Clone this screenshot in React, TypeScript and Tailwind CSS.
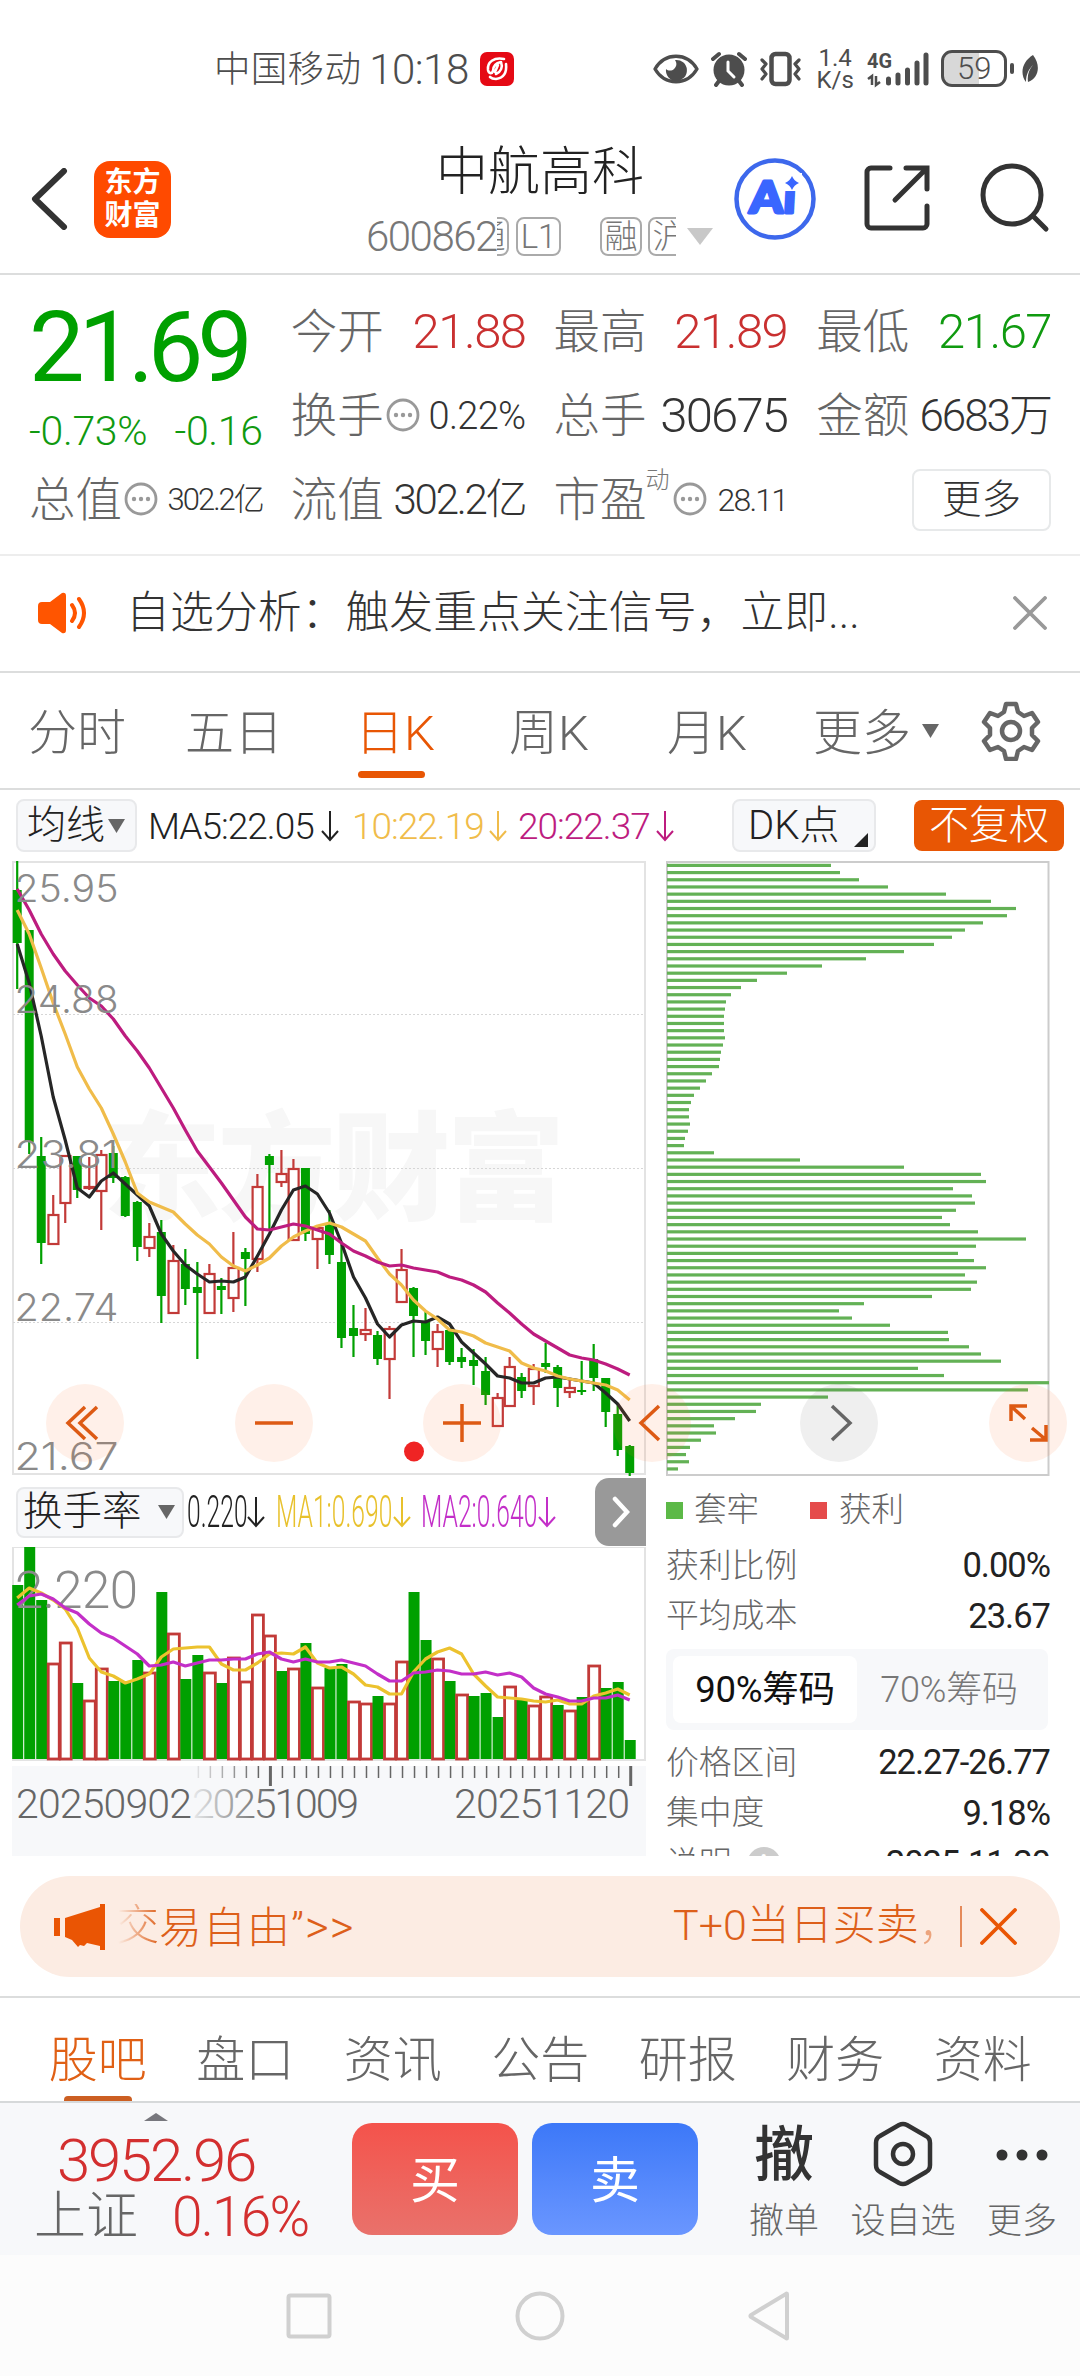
import type { ReactNode } from "react";

const GREEN = "#00a000";
const RED = "#c23a38";

// [open/close top, open/close bottom, high, low, rising]
const candles = [
  [29, 82, 0, 128, 0], [69, 281, 69, 293, 0], [295, 382, 276, 403, 0], [353, 384, 334, 384, 1],
  [294, 343, 294, 362, 1], [295, 329, 295, 337, 0], [325, 327, 296, 329, 1], [293, 331, 289, 369, 1],
  [292, 317, 285, 322, 0], [316, 355, 315, 356, 0], [341, 386, 340, 400, 0], [375, 388, 362, 396, 1],
  [371, 435, 359, 462, 0], [399, 453, 384, 453, 1], [403, 428, 388, 444, 0], [426, 432, 401, 498, 0],
  [412, 453, 403, 453, 1], [425, 429, 417, 453, 0], [406, 438, 371, 451, 1], [391, 398, 387, 445, 0],
  [325, 399, 313, 411, 1], [295, 304, 293, 369, 0], [312, 322, 289, 326, 1], [307, 380, 298, 380, 1],
  [307, 373, 307, 380, 0], [366, 379, 366, 408, 1], [362, 394, 349, 403, 0], [401, 477, 384, 487, 0],
  [467, 475, 444, 496, 0], [468, 474, 447, 480, 1], [474, 498, 470, 504, 0], [467, 499, 465, 538, 1],
  [408, 442, 388, 442, 1], [427, 455, 426, 496, 0], [461, 480, 450, 494, 0], [470, 489, 463, 506, 1],
  [469, 501, 467, 504, 0], [496, 501, 487, 507, 0], [499, 505, 488, 524, 0], [510, 534, 496, 544, 0],
  [536, 566, 532, 566, 1], [505, 546, 496, 546, 1], [516, 530, 512, 537, 0], [507, 526, 503, 544, 1],
  [502, 506, 482, 512, 0], [506, 527, 504, 546, 0], [526, 532, 519, 537, 1], [529, 531, 500, 534, 0],
  [498, 517, 483, 530, 0], [517, 551, 517, 566, 0], [553, 589, 544, 595, 0], [585, 612, 584, 615, 0],
];

const ma5 = [83, 122, 175, 236, 279, 327, 336, 320, 312, 323, 334, 345, 373, 390, 404, 413, 421, 420, 421, 416, 395, 373, 349, 329, 325, 333, 352, 382, 416, 437, 463, 476, 464, 460, 461, 456, 463, 481, 492, 503, 515, 517, 522, 522, 517, 516, 518, 520, 522, 532, 543, 560];
const ma10 = [49, 73, 107, 142, 173, 206, 228, 247, 273, 301, 332, 341, 346, 351, 363, 374, 383, 396, 405, 410, 404, 397, 385, 376, 370, 365, 362, 366, 373, 380, 397, 413, 424, 439, 450, 458, 469, 471, 475, 482, 486, 490, 502, 507, 510, 515, 518, 520, 522, 524, 529, 539];
const ma20 = [28, 49, 73, 93, 110, 124, 137, 145, 158, 175, 190, 207, 227, 247, 269, 290, 306, 322, 339, 356, 368, 369, 366, 363, 365, 369, 373, 382, 390, 395, 401, 405, 404, 407, 409, 411, 416, 419, 424, 431, 442, 452, 463, 473, 480, 487, 494, 497, 499, 503, 508, 514];

const turnover = [39, 1, 54, 117, 96, 137, 154, 122, 135, 136, 114, 126, 46, 87, 133, 109, 126, 137, 111, 135, 68, 89, 125, 122, 97, 141, 122, 118, 155, 157, 150, 157, 115, 46, 94, 112, 135, 148, 150, 147, 171, 140, 154, 159, 150, 159, 164, 151, 119, 142, 136, 194];
const turnoverUp = [3, 4, 6, 7, 11, 13, 16, 18, 19, 20, 21, 23, 25, 28, 29, 31, 32, 35, 37, 41, 43, 44, 46, 48];
const volMa1 = [52, 42, 47, 54, 63, 82, 112, 126, 130, 137, 133, 128, 111, 103, 102, 101, 101, 118, 124, 124, 117, 108, 107, 108, 101, 117, 122, 121, 128, 139, 141, 148, 148, 126, 113, 106, 102, 108, 128, 140, 151, 152, 153, 155, 156, 154, 158, 158, 150, 147, 143, 149];
const volMa2 = [59, 50, 48, 53, 62, 67, 78, 87, 92, 100, 108, 120, 119, 116, 120, 117, 114, 114, 113, 113, 108, 106, 113, 116, 113, 116, 116, 114, 117, 120, 128, 135, 135, 127, 126, 124, 125, 128, 128, 126, 129, 127, 131, 142, 148, 151, 155, 155, 152, 152, 149, 154];

const chips = [
  164, 173, 192, 221, 279, 324, 349, 340, 316, 298, 285, 267, 237, 199, 155, 120, 90, 74, 64, 59,
  58, 57, 57, 57, 58, 56, 54, 53, 52, 45, 39, 33, 27, 24, 22, 22, 23, 21, 18, 17,
  47, 133, 237, 314, 319, 286, 305, 308, 289, 275, 283, 311, 359, 309, 291, 307, 319, 298, 310, 304,
  265, 197, 172, 185, 223, 281, 282, 302, 314, 334, 251, 277, 382, 361, 161, 94, 89, 68, 47, 49,
  34, 23, 19, 22, 11,
];

const cx = (i: number) => -1.8 + i * 12.01;
const line = (ys: number[]) => ys.map((y, i) => `${cx(i).toFixed(1)},${y}`).join(" ");

function StatusBar() {
  return (
    <div className="flex h-[138px] items-center pl-[214px] text-[#4d4d4d]">
      <span className="text-[36.500px] tracking-[0.300px] leading-none pt-[3px]">中国移动</span>
      <span className="ml-[8px] w-[104px] pt-[3px] text-[42px] leading-none tracking-[-0.500px]">10:18</span>
      <svg className="ml-[7px]" width="34" height="34" viewBox="0 0 34 34">
        <rect width="34" height="34" rx="7" fill="#e50914" />
        <path d="M24 7C14 5 7 10 8 18c1 4 4 4 5 1 0-5 3-8 8-9M26 12c1 9-3 14-10 15-4 0-5-1-6-2M21 10c2 5 0 10-5 12M18 13l-3 7" fill="none" stroke="#fff" strokeWidth="2.6" strokeLinecap="round" />
      </svg>
      <svg className="ml-[139px]" width="46" height="34" viewBox="0 0 46 34">
        <path d="M2 17C12 0 34 0 44 17 34 34 12 34 2 17z" fill="none" stroke="#4d4d4d" strokeWidth="3.400" strokeLinejoin="round" />
        <path d="M22 8a10.500 10.500 0 1 1-9 9c2 2 6 2 8 0 3-3 3-6 1-9z" fill="#4d4d4d" />
      </svg>
      <svg className="ml-[12px]" width="36" height="36" viewBox="0 0 36 36">
        <circle cx="18" cy="19" r="15.500" fill="#4d4d4d" />
        <path d="M17 11v9l6 6" fill="none" stroke="#fff" strokeWidth="3" strokeLinecap="round" />
        <path d="M2 8l6-5M34 8l-6-5M5 34l3-4M31 34l-3-4" stroke="#4d4d4d" strokeWidth="4" strokeLinecap="round" />
      </svg>
      <svg className="ml-[12px]" width="44" height="36" viewBox="0 0 44 36">
        <rect x="12.500" y="3" width="18" height="30" rx="4" fill="none" stroke="#4d4d4d" strokeWidth="4.500" />
        <path d="M3 9l4 4-4 5 4 5-4 5M40 9l-4 4 4 5-4 5 4 5" fill="none" stroke="#4d4d4d" strokeWidth="3.200" strokeLinejoin="round" strokeLinecap="round" />
      </svg>
      <div className="ml-[14px] flex w-[36px] flex-col items-center font-['Roboto'] text-[24px] font-normal leading-[22px]">
        <span>1.4</span>
        <span>K/s</span>
      </div>
      <svg className="ml-[14px]" width="64" height="38" viewBox="0 0 64 38">
        <text x="0" y="18" fontFamily="Roboto" fontWeight="700" fontSize="21" textLength="25" lengthAdjust="spacingAndGlyphs" fill="#4d4d4d">4G</text>
        <path d="M5 35V26l-4 3M9 26v9l4-3" fill="none" stroke="#4d4d4d" strokeWidth="2.500" />
        <path d="M21.500 29v4M31 25v8M40.500 20v13M50 13v20M59 5v28" stroke="#4d4d4d" strokeWidth="5" strokeLinecap="round" />
      </svg>
      <div className="ml-[10px] flex h-[37px] w-[66px] items-center justify-center rounded-[11px] border-[3px] border-[#4d4d4d] bg-[linear-gradient(90deg,#d8d8d8_59%,#fff_59%)] text-[31px] leading-none">
        59
      </div>
      <div className="ml-[3px] h-[11px] w-[4px] rounded-full bg-[#4d4d4d]" />
      <svg className="ml-[7px]" width="18" height="30" viewBox="0 0 18 30">
        <path d="M12 1C20 11 18 24 7 28c-1-7 1-12 5-17C8 15 5 20 5 28-2 19 2 7 12 1z" fill="#4d4d4d" />
      </svg>
    </div>
  );
}

function Tag({ children, className = "" }: { children: ReactNode; className?: string }) {
  return (
    <span className={`flex h-[39px] shrink-0 items-center justify-center overflow-hidden rounded-[8px] border-2 border-[#aaa] text-[33px] leading-none text-[#777] ${className}`}>
      {children}
    </span>
  );
}

function Header() {
  return (
    <header className="flex h-[137px] items-start border-b-2 border-[#dcdddd] pl-[31px]">
      <svg className="mt-[30px]" width="37" height="62" viewBox="0 0 37 62">
        <path d="M33 3L4 31l29 28" fill="none" stroke="#333" strokeWidth="6" strokeLinecap="round" strokeLinejoin="round" />
      </svg>
      <div className="ml-[26px] mt-[23px] flex h-[77px] w-[77px] flex-col items-center justify-center rounded-[16px] bg-[#ff4a00] text-[28px] font-bold leading-[33px] text-white">
        <span>东方</span>
        <span>财富</span>
      </div>
      <div className="ml-[195px] w-[349px] pt-[8px]">
        <h1 className="pl-[70px] text-[52px] leading-[54px] text-[#222]">中航高科</h1>
        <div className="mt-[17px] flex h-[40px] items-center">
          <span className="w-[131px] pt-px text-[42px] leading-none tracking-[-1.500px] text-[#777]">600862</span>
          <span className="flex w-[12px] justify-end overflow-hidden">
            <Tag className="w-[40px]">通</Tag>
          </span>
          <Tag className="ml-[7px] w-[45px]">L1</Tag>
          <Tag className="ml-[39px] w-[42px]">融</Tag>
          <span className="ml-[6px] flex w-[28px] overflow-hidden">
            <Tag className="w-[42px]">沪</Tag>
          </span>
          <svg className="ml-[11px]" width="26" height="17" viewBox="0 0 26 17">
            <path d="M0 0h26L13 17z" fill="#c8c8c8" />
          </svg>
        </div>
      </div>
      <svg className="ml-[19px] mt-[20px]" width="82" height="82" viewBox="0 0 82 82">
        <circle cx="41" cy="41" r="38.500" fill="none" stroke="#3d68ec" strokeWidth="4.500" />
        <text x="16" y="55" fontFamily="Lato, sans-serif" fontWeight="900" fontSize="44" textLength="46" lengthAdjust="spacingAndGlyphs" fill="#3a66ff" stroke="#3a66ff" strokeWidth="3" strokeLinejoin="round" transform="skewX(-3) translate(2 0)">Ai</text>
        <rect x="50" y="15" width="18" height="18" fill="#fff" />
        <path d="M58 18q2 5 7 7-5 2-7 7-2-5-7-7 5-2 7-7z" fill="#3a66ff" />
      </svg>
      <svg className="ml-[47px] mt-[26px]" width="68" height="68" viewBox="0 0 68 68">
        <path d="M27 4H8a4 4 0 0 0-4 4v52a4 4 0 0 0 4 4h52a4 4 0 0 0 4-4V42M43 4h21v21M63 5L32 36" fill="none" stroke="#333" strokeWidth="5" strokeLinecap="round" />
      </svg>
      <svg className="ml-[49px] mt-[25px]" width="70" height="72" viewBox="0 0 70 72">
        <circle cx="32" cy="32" r="29" fill="none" stroke="#333" strokeWidth="5" />
        <path d="M53 53l13 13" stroke="#333" strokeWidth="5" strokeLinecap="round" />
      </svg>
    </header>
  );
}

function MoreDots() {
  return (
    <svg className="ml-[2px] shrink-0" width="34" height="34" viewBox="0 0 34 34">
      <circle cx="17" cy="17" r="15" fill="none" stroke="#999" strokeWidth="2.800" />
      <circle cx="10" cy="17" r="2.200" fill="#999" />
      <circle cx="17" cy="17" r="2.200" fill="#999" />
      <circle cx="24" cy="17" r="2.200" fill="#999" />
    </svg>
  );
}

function Quote({ label, dots, sup, children }: { label: string; dots?: boolean; sup?: string; children: ReactNode }) {
  return (
    <div className="flex h-[60px] items-center whitespace-nowrap leading-none">
      <span className="pt-[2px] text-[46.500px] text-[#666]">{label}</span>
      {sup && <sup className="top-0 -ml-px -mt-px w-[25px] self-start text-[24px] leading-none text-[#777]">{sup}</sup>}
      {dots && <MoreDots />}
      <span className="ml-auto pt-[2px] text-[#333]">{children}</span>
    </div>
  );
}

function QuotePanel() {
  return (
    <section className="flex h-[281px] border-b-2 border-[#ededed] px-[29px]">
      <div className="w-[234px] whitespace-nowrap leading-none">
        <div className="mt-[22px] h-[99px] text-[99px] font-normal leading-[100px] tracking-[-6.200px] text-[#00a000]">21.69</div>
        <div className="mt-[11px] flex h-[50px] items-center justify-between text-[41px] text-[#109a10]">
          <span className="tracking-[-0.300px]">-0.73%</span>
          <span className="tracking-[-0.300px]">-0.16</span>
        </div>
        <div className="mt-[12px]">
          <Quote label="总值" dots>
            <span className="text-[31px] tracking-[-2px]">302.2亿</span>
          </Quote>
        </div>
      </div>
      <div className="ml-[28px] flex w-[235px] flex-col gap-[24px] pt-[26px]">
        <Quote label="今开"><span className="text-[49px] tracking-[-1.500px] text-[#c93030]">21.88</span></Quote>
        <Quote label="换手" dots><span className="text-[38px] tracking-[-0.700px]">0.22%</span></Quote>
        <Quote label="流值"><span className="text-[42px] tracking-[-2.200px]">302.2亿</span></Quote>
      </div>
      <div className="ml-[28px] flex w-[234px] flex-col gap-[24px] pt-[26px]">
        <Quote label="最高"><span className="text-[49px] tracking-[-1.500px] text-[#c93030]">21.89</span></Quote>
        <Quote label="总手"><span className="text-[49px] tracking-[-1.800px]">30675</span></Quote>
        <Quote label="市盈" sup="动" dots><span className="text-[32px] tracking-[-1.800px]">28.11</span></Quote>
      </div>
      <div className="ml-[29px] flex w-[235px] flex-col gap-[24px] pt-[26px]">
        <Quote label="最低"><span className="text-[49px] tracking-[-1.500px] text-[#109a10]">21.67</span></Quote>
        <Quote label="金额"><span className="text-[44px] tracking-[-2px]">6683万</span></Quote>
        <button className="h-[62px] w-[139px] self-end rounded-[8px] border-2 border-[#e7e9ea] text-[39.500px] leading-none text-[#333]">更多</button>
      </div>
    </section>
  );
}

function NewsRow() {
  return (
    <section className="flex h-[118px] items-center border-b-2 border-[#dcdddd] pl-[38px] pr-[33px]">
      <svg width="52" height="42" viewBox="0 0 52 42">
        <path d="M4 10h8L24 1q4-1 4 3v34q0 4-4 3L12 32H4q-4 0-4-4V14q0-4 4-4z" fill="#ff5500" />
        <path d="M34 13q6 8 0 16M41 7q10 14 0 28" fill="none" stroke="#ff5500" strokeWidth="4" strokeLinecap="round" />
      </svg>
      <p className="ml-[36px] flex-1 pt-px text-[43.900px] leading-none text-[#333]">自选分析：触发重点关注信号，立即...</p>
      <svg width="34" height="34" viewBox="0 0 34 34">
        <path d="M2 2l30 30M32 2L2 32" stroke="#999" strokeWidth="3.800" strokeLinecap="round" />
      </svg>
    </section>
  );
}

function Caret({ className = "" }: { className?: string }) {
  return (
    <svg className={className} width="17" height="14" viewBox="0 0 17 14">
      <path d="M0 0h17L8.500 14z" fill="#666" />
    </svg>
  );
}

function PeriodTabs() {
  return (
    <nav className="flex h-[117px] items-center border-b-2 border-[#dcdddd] pl-[28px] text-[49px] leading-none text-[#666]">
      <span className="w-[157px] pt-[5px]">分时</span>
      <span className="w-[170px] pt-[5px]">五日</span>
      <span className="relative w-[154px] pt-[5px] text-[#e85604]">
        日K
        <i className="absolute -bottom-[20px] left-[3px] h-[7px] w-[67px] rounded-full bg-[#e85604]" />
      </span>
      <span className="w-[158px] pt-[5px]">周K</span>
      <span className="w-[146px] pt-[5px]">月K</span>
      <span className="pt-[5px]">更多</span>
      <Caret className="ml-[11px]" />
      <svg className="ml-[42px]" width="60" height="60" viewBox="0 0 60 60">
        <path d="M25 3h10l2 8 6 4 8-3 6 9-6 6v7l6 6-6 9-8-3-6 4-2 8H25l-2-8-6-4-8 3-6-9 6-6v-7l-6-6 6-9 8 3 6-4z" fill="none" stroke="#666" strokeWidth="4.500" strokeLinejoin="round" />
        <circle cx="30" cy="30" r="9" fill="none" stroke="#666" strokeWidth="4.500" />
      </svg>
    </nav>
  );
}

function Down({ color }: { color: string }) {
  return (
    <svg className="shrink-0" width="18" height="32" viewBox="0 0 18 32">
      <path d="M9 1v29M1 21l8 9 8-9" fill="none" stroke={color} strokeWidth="2" />
    </svg>
  );
}

function MaRow() {
  return (
    <div className="flex h-[71px] items-center pl-[16px] text-[37px] leading-none tracking-[-1px]">
      <button className="flex h-[53px] w-[121px] items-center rounded-[8px] border-2 border-[#e8e9eb] bg-[#f7f8fa] pl-[9px] text-[39px] tracking-normal text-[#222]">
        均线
        <Caret className="ml-[3px]" />
      </button>
      <span className="ml-[11px] w-[173px] pt-[2px] text-[#222]">MA5:22.05</span>
      <Down color="#222" />
      <span className="ml-[13px] w-[137px] pt-[2px] text-[#f0bc4a]">10:22.19</span>
      <Down color="#f0bc4a" />
      <span className="ml-[11px] w-[138px] pt-[2px] text-[#bd1c7f]">20:22.37</span>
      <Down color="#bd1c7f" />
      <button className="ml-[58px] flex h-[53px] w-[144px] items-center rounded-[8px] border-2 border-[#e8e9eb] bg-[#f7f8fa] pl-[14px] text-[40px] tracking-normal text-[#222]">
        DK点
        <svg className="mb-[3px] ml-auto mr-[6px] self-end" width="14" height="14" viewBox="0 0 14 14">
          <path d="M14 0v14H0z" fill="#222" />
        </svg>
      </button>
      <button className="ml-[38px] h-[51px] w-[150px] rounded-[8px] bg-[#e85604] text-[40px] tracking-normal text-white">不复权</button>
    </div>
  );
}

function KLineChart() {
  const prices = [["25.95", 41], ["24.88", 152], ["23.81", 307], ["22.74", 460], ["21.67", 609]] as const;
  return (
    <svg className="block" width="634" height="616" viewBox="-7 0 634 616">
      <rect x="-6" y="1" width="632" height="612" fill="#fff" stroke="#e3e3e3" strokeWidth="2" />
      <text x="84" y="350" fontSize="118" fontWeight="900" textLength="462" fill="#f7f7f7">东方财富</text>
      {[153.5, 307.5, 461.5].map((y) => (
        <path key={y} d={`M-6 ${y}h632`} stroke="#d6d6d6" strokeDasharray="2 2" />
      ))}
      {candles.map(([top, bottom, high, low, up], i) => (
        <g key={i} stroke={up ? RED : GREEN} strokeWidth="2.200">
          <path d={`M${cx(i)} ${high}V${top}M${cx(i)} ${bottom}V${low}`} />
          {up ? (
            <rect x={cx(i) - 4.8} y={top + 1} width="10" height={Math.max(bottom - top - 2, 1)} fill="#fff" />
          ) : (
            <rect x={cx(i) - 4.5} y={top} width="9" height={bottom - top} fill={GREEN} stroke="none" />
          )}
        </g>
      ))}
      <g fill="none" strokeWidth="3.200" strokeLinejoin="round">
        <polyline points={line(ma5)} stroke="#262626" />
        <polyline points={line(ma10)} stroke="#f0bc4a" />
        <polyline points={line(ma20)} stroke="#bd1c7f" />
      </g>
      <g fontFamily="Inter, sans-serif" fontWeight="300" fontSize="37.500" fill="#8a8a8a">
        {prices.map(([label, y]) => (
          <text key={label} x="-4.500" y={y} textLength="104" lengthAdjust="spacingAndGlyphs">{label}</text>
        ))}
      </g>
      <circle cx="395" cy="590.500" r="10" fill="#ef2424" />
    </svg>
  );
}

function IndicatorRow() {
  return (
    <div className="flex h-[70px] items-center pl-[4px] text-[44px] leading-none">
      <button className="flex h-[51px] w-[168px] shrink-0 items-center rounded-[8px] border-2 border-[#e8e9eb] bg-[#f7f8fa] pl-[5px] text-[39.500px] text-[#222]">
        换手率
        <Caret className="ml-[16px]" />
      </button>
      <span className="ml-[3px] flex w-[60px] shrink-0"><span className="origin-left scale-x-[0.56] whitespace-nowrap text-[#222]">0.220</span></span>
      <Down color="#222" />
      <span className="ml-[11px] flex w-[117px] shrink-0"><span className="origin-left scale-x-[0.56] whitespace-nowrap text-[#e8c12c]">MA1:0.690</span></span>
      <Down color="#e8c12c" />
      <span className="ml-[10px] flex w-[117px] shrink-0"><span className="origin-left scale-x-[0.56] whitespace-nowrap text-[#c32fc8]">MA2:0.640</span></span>
      <Down color="#c32fc8" />
      <button className="ml-auto flex h-[68px] w-[51px] shrink-0 items-center justify-center rounded-l-[14px] bg-[#999]">
        <svg width="18" height="32" viewBox="0 0 18 32">
          <path d="M3 3l12 13L3 29" fill="none" stroke="#fff" strokeWidth="4.500" strokeLinecap="round" />
        </svg>
      </button>
    </div>
  );
}

function TurnoverChart() {
  return (
    <svg className="block" width="634" height="219" viewBox="-7 1 634 219">
      <rect x="-6" y="1" width="632" height="213" fill="#fff" stroke="#e3e3e3" strokeWidth="2" />
      {turnover.map((top, i) =>
        turnoverUp.includes(i) ? (
          <rect key={i} x={cx(i) - 5} y={top + 1} width="11" height={212 - top} fill="#fff" stroke={RED} strokeWidth="2.800" />
        ) : (
          <rect key={i} x={cx(i) - 5} y={top} width="11" height={213 - top} fill={GREEN} />
        ),
      )}
      <text x="-4" y="62" fontSize="51" fontWeight="300" textLength="123" fill="#8a8a8a">2.220</text>
      <g fill="none" strokeWidth="3.200" strokeLinejoin="round">
        <polyline points={line(volMa1)} stroke="#ecc22e" />
        <polyline points={line(volMa2)} stroke="#c32fc8" />
      </g>
    </svg>
  );
}

function DateAxis() {
  return (
    <svg className="block bg-[#f7f8fa]" width="634" height="92" viewBox="-7 0 634 92">
      <defs>
        <linearGradient id="fade">
          <stop offset="0" stopColor="#666" stopOpacity="0.100" />
          <stop offset="0.350" stopColor="#666" stopOpacity="0.800" />
          <stop offset="0.500" stopColor="#666" />
        </linearGradient>
      </defs>
      {turnover.map((_, i) => {
        if (i < 15) return null;
        const long = i === 21 || i === 51;
        return (
          <path key={i} d={`M${cx(i) + 1} 0v${long ? 20 : 12}`} stroke="#666" strokeWidth={long ? 3 : 1.5} opacity={Math.min(1, (i - 14) / 6)} />
        );
      })}
      <g fontSize="41" fontWeight="300" fill="#666">
        <text x="-3" y="52" textLength="176">20250902</text>
        <text x="173" y="52" textLength="167" fill="url(#fade)">20251009</text>
        <text x="435" y="52" textLength="176">20251120</text>
      </g>
    </svg>
  );
}

function ChipChart() {
  return (
    <svg className="block" width="384" height="616" viewBox="0 0 384 616">
      <rect x="1" y="1" width="381.500" height="613" fill="#fff" stroke="#cccccc" strokeWidth="2" />
      <g fill="#63b155">
        {chips.map((w, i) => (
          <rect key={i} x="1" y={2.8 + i * 7.185} width={w} height="3.200" />
        ))}
      </g>
    </svg>
  );
}

function Row({ label, value }: { label: ReactNode; value: string }) {
  return (
    <div className="flex h-[50.500px] items-center justify-between leading-none">
      <span className="flex items-center pt-px text-[32.800px] text-[#666]">{label}</span>
      <span className="text-[34.500px] font-normal tracking-[-1px] text-[#222]">{value}</span>
    </div>
  );
}

function ChipPanel() {
  return (
    <div className="w-[384px]">
      <ChipChart />
      <div className="flex h-[63px] items-center pt-[3px] text-[32.500px] leading-none text-[#666]">
        <i className="h-[17px] w-[17px] bg-[#5cb947]" />
        <span className="ml-[11px]">套牢</span>
        <i className="ml-[51px] h-[17px] w-[17px] bg-[#e54b4b]" />
        <span className="ml-[12px]">获利</span>
      </div>
      <Row label="获利比例" value="0.00%" />
      <Row label="平均成本" value="23.67" />
      <div className="mb-[7px] mt-[8px] flex h-[81px] w-[382px] items-center rounded-[8px] bg-[#f7f8fa] p-[7px] leading-none">
        <span className="flex h-[67px] w-[184px] items-center justify-center whitespace-nowrap rounded-[8px] bg-white pt-px text-[36.500px] font-normal tracking-[-0.300px] text-[#111]">90%筹码</span>
        <span className="flex-1 whitespace-nowrap pt-px text-center text-[36px] tracking-[-0.200px] text-[#777]">70%筹码</span>
      </div>
      <Row label="价格区间" value="22.27-26.77" />
      <Row label="集中度" value="9.18%" />
      <Row
        label={
          <>
            说明
            <i className="ml-[15px] flex h-[34px] w-[34px] items-center justify-center rounded-full bg-[#ccc] text-[24px] font-bold not-italic text-white">i</i>
          </>
        }
        value="2025-11-20"
      />
    </div>
  );
}

function RoundButton({ children, className }: { children: ReactNode; className: string }) {
  return (
    <button className={`absolute top-[523px] flex h-[78px] w-[78px] items-center justify-center rounded-full ${className}`}>
      <svg width="42" height="42" viewBox="0 0 42 42" fill="none" stroke="currentColor" strokeWidth="3.500">
        {children}
      </svg>
    </button>
  );
}

function ChartArea() {
  return (
    <section className="relative flex h-[996px] overflow-hidden pl-[12px]">
      <div className="w-[634px]">
        <KLineChart />
        <IndicatorRow />
        <TurnoverChart />
        <DateAxis />
      </div>
      <div className="ml-[20px]">
        <ChipPanel />
      </div>
      <RoundButton className="left-[46px] bg-[#ff6a20]/10 text-[#dd5a14]"><path d="M21 5L4 21l17 16M33 5L16 21l17 16" /></RoundButton>
      <RoundButton className="left-[235px] bg-[#ff6a20]/10 text-[#dd5a14]"><path d="M2 21h38" /></RoundButton>
      <RoundButton className="left-[423px] bg-[#ff6a20]/10 text-[#dd5a14]"><path d="M2 21h38M21 2v38" /></RoundButton>
      <RoundButton className="left-[613px] bg-[#ff6a20]/10 text-[#dd5a14]"><path d="M28 4L10 21l18 17" /></RoundButton>
      <RoundButton className="left-[800px] bg-[#666]/10 text-[#666]"><path d="M14 4l18 17-18 17" /></RoundButton>
      <RoundButton className="left-[989px] bg-[#ff6a20]/10 text-[#dd5a14]"><path d="M20 4H4v15M5 5l13 12M39 23v15H23M38 37L25 26" /></RoundButton>
    </section>
  );
}

function Banner() {
  return (
    <section className="border-b-2 border-[#dcdddd] px-[20px] pb-[19px] pt-[20px]">
      <div className="flex h-[101px] items-center rounded-full bg-[#fcece3] pl-[34px] pr-[43px] text-[43px] leading-none text-[#dd5f1a]">
        <svg width="51" height="46" viewBox="0 0 51 46">
          <path d="M0 14h6v18H0zM11 14L46 3V0h5v46h-5v-4l-13-3-3 3-4-1-2 2-6-7-7-3z" fill="#ea5504" />
        </svg>
        <div className="ml-[11px] flex flex-1 justify-between whitespace-nowrap pt-px">
          <span className="flex tracking-[1px]">
            <span className="bg-[linear-gradient(90deg,#fcece3_5%,#dd5f1a)] bg-clip-text text-transparent">交</span>
            <span className="-ml-px">易自由”<span className="text-[46px]">&gt;&gt;</span></span>
          </span>
          <span className="flex w-[260px] overflow-hidden">
            T+0当日买卖<span className="opacity-50">，</span>
          </span>
        </div>
        <i className="ml-[27px] h-[41px] w-[2px] bg-[#e58a5a]" />
        <svg className="ml-[18px]" width="37" height="37" viewBox="0 0 37 37">
          <path d="M2 2l33 33M35 2L2 35" stroke="#ea5504" strokeWidth="3.800" strokeLinecap="round" />
        </svg>
      </div>
    </section>
  );
}

function InfoTabs() {
  const tabs = ["股吧", "盘口", "资讯", "公告", "研报", "财务", "资料"];
  return (
    <nav className="flex h-[105px] border-b-2 border-[#d6d9da] pl-[24px] text-[49px] leading-none text-[#666]">
      {tabs.map((tab, i) => (
        <span key={tab} className={`flex w-[147.500px] flex-col items-center pt-[38px] ${i === 0 ? "text-[#e06015]" : ""}`}>
          {tab}
          {i === 0 && <i className="mt-auto h-[5px] w-[68px] rounded-t-[4px] bg-[#cc5f22]" />}
        </span>
      ))}
    </nav>
  );
}

function TradeBar() {
  return (
    <footer className="flex h-[152px] bg-[#f7f8fa]">
      <div className="w-[352px] whitespace-nowrap leading-none">
        <svg className="ml-[144px] mt-[10px]" width="24" height="8" viewBox="0 0 24 8">
          <path d="M12 0l12 8H0z" fill="#77777d" />
        </svg>
        <div className="mt-[11px] pl-[57px] text-[60px] leading-[58px] tracking-[-2.300px] text-[#d32f2f]">3952.96</div>
        <div className="flex items-center pl-[34px]">
          <span className="text-[52px] leading-[54px] text-[#666]">上证</span>
          <span className="ml-[34px] text-[55px] leading-[54px] tracking-[-1.800px] text-[#d32f2f]">0.16%</span>
        </div>
      </div>
      <div className="flex gap-[14px] pt-[20px] text-[50px] leading-none text-white">
        <button className="h-[112px] w-[166px] rounded-[20px] bg-linear-to-b from-[#f4524b] to-[#e9716b] pt-[4px] font-normal">买</button>
        <button className="h-[112px] w-[166px] rounded-[20px] bg-linear-to-b from-[#3c78f8] to-[#6a96ff] pt-[4px] font-normal">卖</button>
      </div>
      <div className="ml-[47px] flex pt-[18px] text-[35px] leading-none text-[#666]">
        <div className="flex w-[78px] flex-col items-center">
          <span className="h-[66px] text-[60px] font-medium leading-[69px] text-[#333]">撤</span>
          <span className="mt-[17px] whitespace-nowrap">撤单</span>
        </div>
        <div className="ml-[26px] flex w-[108px] flex-col items-center">
          <svg width="60" height="66" viewBox="0 0 60 66">
            <path d="M26 4q4-2 8 0l19 11q4 2 4 7v22q0 5-4 7L34 62q-4 2-8 0L7 51q-4-2-4-7V22q0-5 4-7z" fill="none" stroke="#333" strokeWidth="4.500" />
            <circle cx="30" cy="33" r="10" fill="none" stroke="#333" strokeWidth="4.500" />
          </svg>
          <span className="mt-[17px] whitespace-nowrap">设自选</span>
        </div>
        <div className="ml-[27px] flex w-[76px] flex-col items-center">
          <svg width="54" height="66" viewBox="0 0 54 66" fill="#333">
            <circle cx="7" cy="34" r="5.500" />
            <circle cx="27" cy="34" r="5.500" />
            <circle cx="47" cy="34" r="5.500" />
          </svg>
          <span className="mt-[17px] whitespace-nowrap">更多</span>
        </div>
      </div>
    </footer>
  );
}

function SystemNav() {
  return (
    <div className="flex h-[121px] items-center justify-between bg-[#fcfcfc] pl-[285px] pr-[289px]">
      <svg width="48" height="48" viewBox="0 0 48 48">
        <rect x="3.500" y="3.500" width="41" height="41" rx="2" fill="none" stroke="#d0d0d0" strokeWidth="4" />
      </svg>
      <svg width="50" height="50" viewBox="0 0 50 50">
        <circle cx="25" cy="25" r="22.500" fill="none" stroke="#d0d0d0" strokeWidth="4" />
      </svg>
      <svg width="44" height="52" viewBox="0 0 44 52">
        <path d="M40 4v44q0 1-1 0L4 27q-1-1 0-2L39 4q1-1 1 0z" fill="none" stroke="#d0d0d0" strokeWidth="4" />
      </svg>
    </div>
  );
}

export default function App() {
  return (
    <main className="flex h-[2376px] w-[1080px] flex-col overflow-hidden bg-white font-['Roboto','Noto_Sans_CJK_SC',sans-serif] font-light">
      <StatusBar />
      <Header />
      <QuotePanel />
      <NewsRow />
      <PeriodTabs />
      <MaRow />
      <ChartArea />
      <Banner />
      <InfoTabs />
      <TradeBar />
      <SystemNav />
    </main>
  );
}
